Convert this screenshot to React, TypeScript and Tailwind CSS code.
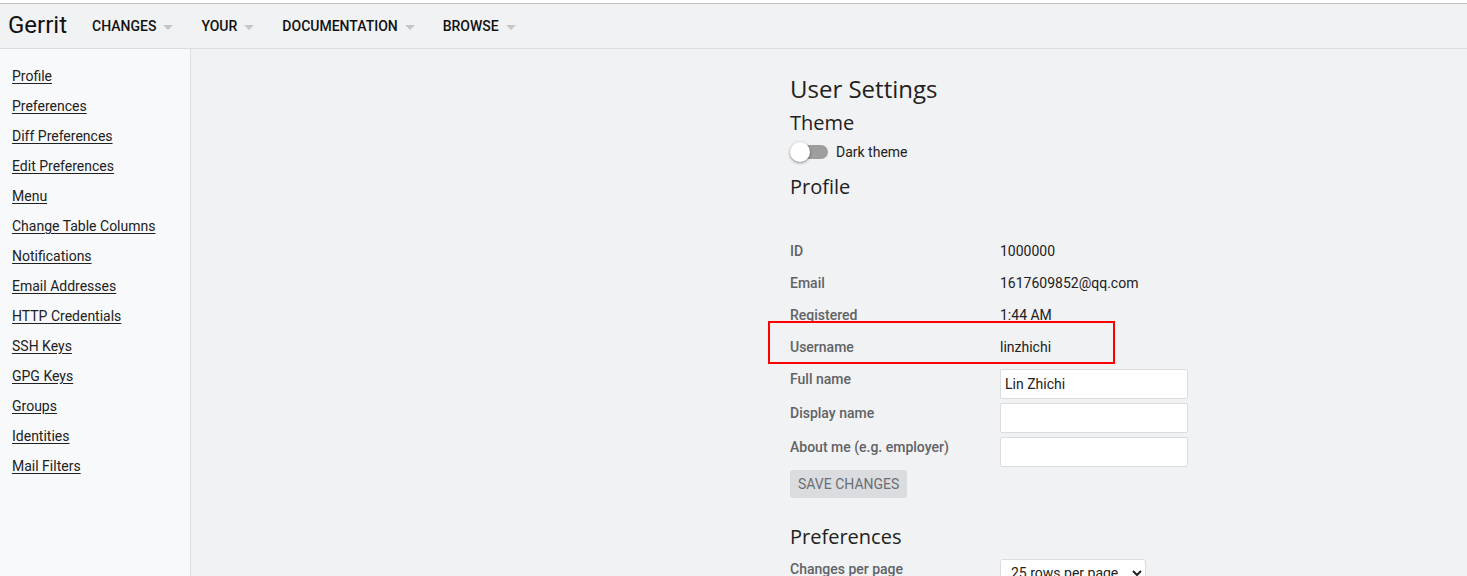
import React from 'react';

const navItems = ['CHANGES', 'YOUR', 'DOCUMENTATION', 'BROWSE'];

const sideLinks = [
  'Profile',
  'Preferences',
  'Diff Preferences',
  'Edit Preferences',
  'Menu',
  'Change Table Columns',
  'Notifications',
  'Email Addresses',
  'HTTP Credentials',
  'SSH Keys',
  'GPG Keys',
  'Groups',
  'Identities',
  'Mail Filters',
];

const infoRows = [
  { label: 'ID', value: '1000000' },
  { label: 'Email', value: '1617609852@qq.com' },
  { label: 'Registered', value: '1:44 AM' },
  { label: 'Username', value: 'linzhichi' },
];

const inputRows = [
  { label: 'Full name', value: 'Lin Zhichi' },
  { label: 'Display name', value: '' },
  { label: 'About me (e.g. employer)', value: '' },
];

const Caret = () => (
  <svg width="10" height="5" viewBox="0 0 10 5" className="ml-[7px] mt-[1px]">
    <path d="M0 0 L10 0 L5 5 Z" fill="#c4c6c9" />
  </svg>
);

const App: React.FC = () => {
  return (
    <div className="bg-[#f1f2f3] text-[#212121] font-['Roboto',sans-serif] overflow-hidden h-[576px]">
      <div className="h-[3px] bg-white" />
      <header className="h-[46px] flex items-center border-t border-b border-t-[#c2c2c2] border-b-[#dadce0] bg-[#f1f2f3]">
        <span className="pl-[8px] text-[24px] leading-none text-[#111] mr-[25px] mb-[2px]">Gerrit</span>
        <nav className="flex items-center mt-[1px]">
          {navItems.map((item) => (
            <div key={item} className="flex items-center text-[14px] font-medium text-[#111] mr-[28px]">
              {item}
              <Caret />
            </div>
          ))}
        </nav>
      </header>
      <div className="flex">
        <aside className="w-[191px] shrink-0 bg-[#f8f9fa] border-r border-[#dadce0] h-[528px] pt-[15px] pl-[12px]">
          <ul className="flex flex-col">
            {sideLinks.map((link) => (
              <li key={link} className="h-[30px] text-[14px] leading-[24px]">
                <a href="#" className="underline underline-offset-[2px] text-[#212121]">{link}</a>
              </li>
            ))}
          </ul>
        </aside>
        <main className="flex-1 pl-[599px] pt-[25px] relative">
          <h1 className="font-['Open_Sans',sans-serif] text-[24px] leading-[30px] text-[#212121]">User Settings</h1>
          <h2 className="font-['Open_Sans',sans-serif] text-[20px] leading-[28px] mt-[5px] text-[#212121]">Theme</h2>
          <div className="flex items-center h-[26px] mt-[2px]">
            <div className="relative w-[38px] h-[20px] flex items-center">
              <div className="w-[36px] h-[14px] rounded-full bg-[#9e9e9e] ml-[2px]" />
              <div className="absolute left-0 top-0 w-[20px] h-[20px] rounded-full bg-white shadow-[0_1px_3px_rgba(0,0,0,0.45)]" />
            </div>
            <span className="ml-[8px] text-[14px]">Dark theme</span>
          </div>
          <h2 className="font-['Open_Sans',sans-serif] text-[20px] leading-[28px] mt-[8px] text-[#212121]">Profile</h2>
          <div className="mt-[40px] flex flex-col">
            {infoRows.map((row) => (
              <div key={row.label} className="flex h-[32px] text-[14px] leading-[20px]">
                <div className="w-[210px] font-medium text-[#5f6368]">{row.label}</div>
                <div className="text-[#212121]">{row.value}</div>
              </div>
            ))}
            {inputRows.map((row) => (
              <div key={row.label} className="flex h-[34px] text-[14px] leading-[20px]">
                <div className="w-[210px] font-medium text-[#5f6368]">{row.label}</div>
                <input
                  type="text"
                  defaultValue={row.value}
                  className="w-[188px] h-[30px] bg-white border border-[#dadce0] rounded-[2px] px-[4px] text-[14px] text-[#212121] outline-none"
                />
              </div>
            ))}
          </div>
          <div className="mt-[-1px]">
            <button className="h-[28px] px-[8px] bg-[#dadce0] rounded-[3px] text-[14px] text-[#6b6e72] uppercase">
              Save Changes
            </button>
          </div>
          <h2 className="font-['Open_Sans',sans-serif] text-[20px] leading-[28px] mt-[25px] text-[#212121]">Preferences</h2>
          <div className="flex text-[14px] leading-[20px] mt-[8px]">
            <div className="w-[210px] font-medium text-[#5f6368]">Changes per page</div>
            <select className="w-[146px] h-[28px] bg-white border border-[#dadce0] rounded-[3px] text-[14px] px-[6px]">
              <option>25 rows per page</option>
            </select>
          </div>
          <div className="absolute left-[577px] top-[272px] w-[347px] h-[43px] border-2 border-[#ff0000] pointer-events-none" />
        </main>
      </div>
    </div>
  );
};

export default App;
